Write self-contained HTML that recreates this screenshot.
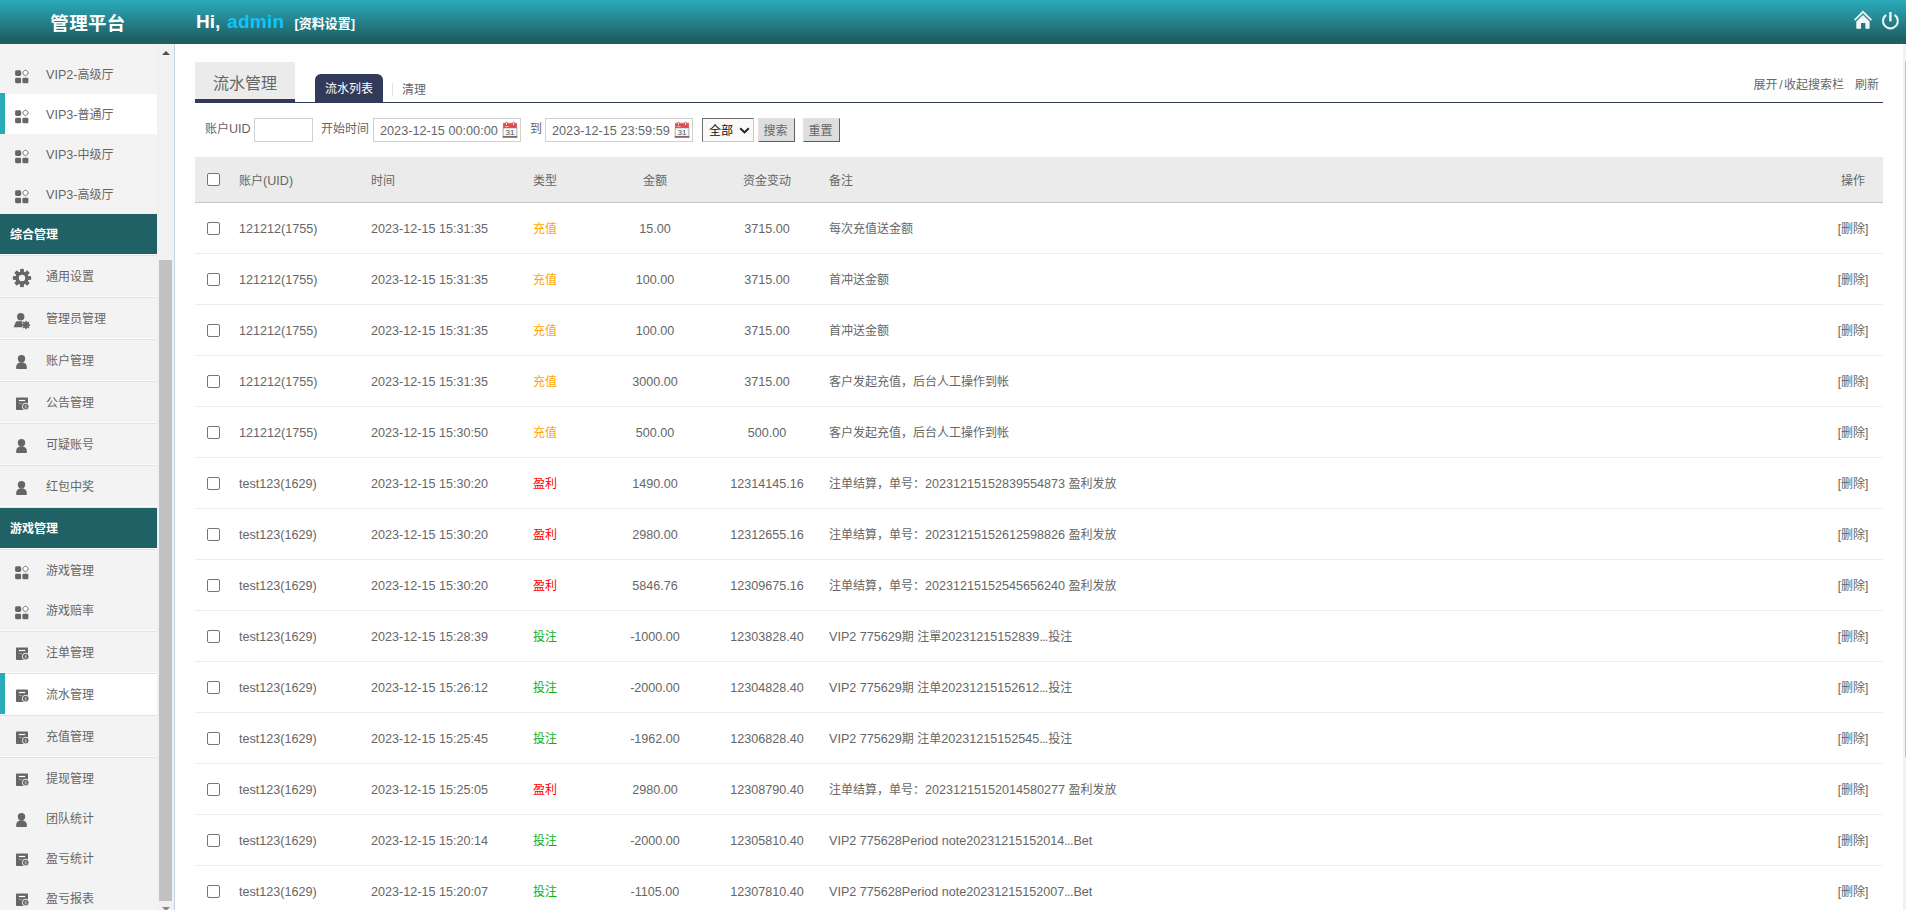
<!DOCTYPE html>
<html lang="zh-CN">
<head>
<meta charset="utf-8">
<title>管理平台</title>
<style>
*{box-sizing:border-box;}
html,body{margin:0;padding:0;}
body{width:1906px;height:910px;overflow:hidden;background:#fff;position:relative;
  font-family:"Liberation Sans","Noto Sans CJK SC",sans-serif;font-size:12px;color:#666;}
a{color:inherit;text-decoration:none;}
ul{list-style:none;margin:0;padding:0;}
.n{font-size:12.6px;}
.d{letter-spacing:-0.7px;margin-right:0.7px;}

/* ---------- header ---------- */
#hd{position:absolute;left:0;top:0;width:1906px;height:44px;
  background:linear-gradient(to bottom,#2babbb 0%,#1f5f64 90%,#1f5f64 100%);color:#fff;}
#logo{position:absolute;left:0;top:0;width:176px;height:44px;line-height:47px;text-align:center;
  font-size:18.5px;font-weight:bold;letter-spacing:0.35px;}
#hi{position:absolute;left:196px;top:0;height:44px;line-height:44px;font-size:19px;font-weight:bold;white-space:nowrap;}
#hi b{color:#12c4fb;letter-spacing:0.25px;margin-left:1.5px;}
#prof{position:absolute;left:294.5px;top:0;height:44px;line-height:47px;font-size:13px;font-weight:bold;white-space:nowrap;}
#hd svg{position:absolute;}

/* ---------- sidebar ---------- */
#side{position:absolute;left:0;top:44px;width:175px;height:866px;background:#f1f1f1;border-right:1px solid #c3d0dd;overflow:hidden;}
#menu{position:absolute;left:0;top:-30px;width:157px;background:#f3f3f3;}
#menu li{position:relative;height:40px;line-height:43px;padding-left:46px;color:#666;white-space:nowrap;}
#menu li.sp{height:2px;padding:0;background:linear-gradient(to bottom,#fcfcfc 0,#fcfcfc 1px,#e4e4e4 1px,#e4e4e4 2px);}
#menu li.on{background:#fff;}
#menu li.on::before{content:"";position:absolute;left:0;top:-1px;width:5px;height:41px;background:#2aabb9;}
#menu li.h{background:#206166;color:#fff;font-weight:bold;padding-left:10px;height:40px;line-height:42px;}
#menu li svg{position:absolute;left:12px;top:11.5px;width:20px;height:20px;}
#sb{position:absolute;left:157px;top:0;width:17px;height:866px;background:#f1f1f1;}
#sb .th{position:absolute;left:2px;top:216px;width:13px;height:641px;background:#c1c1c1;}
#sb .up{position:absolute;left:4.5px;top:7px;width:0;height:0;border:4px solid transparent;border-top:0;border-bottom:4px solid #505050;}
#sb .dn{position:absolute;left:4.5px;top:863px;width:0;height:0;border:4px solid transparent;border-bottom:0;border-top:4px solid #8a8686;}

/* ---------- main ---------- */
#main{position:absolute;left:195px;top:62px;width:1688px;}
#tabs{position:relative;height:41px;border-bottom:1px solid #323a5a;}
#ttl{position:absolute;left:0;top:0;width:100px;height:40px;background:#ebebeb;border-bottom:3px solid #323a5a;
  text-align:center;font-size:16px;line-height:44px;color:#666;}
#t1{position:absolute;left:120px;top:12px;width:68px;height:28px;background:#323a5a;color:#fff;border-radius:6px 6px 0 0;
  text-align:center;line-height:31px;font-size:12px;}
#sep{position:absolute;left:197px;top:21px;width:1px;height:13px;background:#d9e6e6;}
#t2{position:absolute;left:207px;top:12px;line-height:32px;font-size:12px;color:#666;}
#tr{position:absolute;right:4px;top:12px;line-height:22px;font-size:12px;color:#666;white-space:nowrap;}
#tr span{margin-left:11px;}

#srch{position:absolute;left:0;top:56px;height:24px;width:900px;}
#srch>*{position:absolute;top:0;height:24px;}
#srch .lb{line-height:23px;white-space:nowrap;}
#srch .in{border:1px solid #d0d0d0;background:#fff;line-height:24px;padding-left:6px;font-size:12.7px;color:#666;white-space:nowrap;}
#srch .in svg{position:absolute;right:2px;top:2px;}
#srch .sel{border:1px solid #6e6e6e;border-right-color:#c8c8c8;border-bottom-color:#c8c8c8;background:#f9f9f9;color:#111;line-height:24px;padding-left:6px;font-size:12px;}
#srch .btn{padding-right:2px;border:1px solid #e2e2e2;border-right:1px solid #606060;border-bottom:1px solid #606060;background:#dedede;color:#666;text-align:center;line-height:24px;font-size:12px;}

#tb{position:absolute;left:0;top:95px;width:1688px;border-collapse:collapse;table-layout:fixed;}
#tb th{height:45px;line-height:20px;background:#ebebeb;font-weight:normal;text-align:left;padding:4px 0 0 0;color:#666;border-bottom:1px solid #c6c6c6;}
#tb td{height:51px;line-height:20px;padding:2px 0 0 0;border-bottom:1px solid #ececec;white-space:nowrap;overflow:hidden;}
#tb tr>*:nth-child(1){width:44px;}
#tb tr>*:nth-child(2){width:132px;}
#tb tr>*:nth-child(3){width:162px;}
#tb tr>*:nth-child(4){width:67px;}
#tb tr>*:nth-child(5){width:110px;text-align:center;}
#tb tr>*:nth-child(6){width:114px;text-align:center;}
#tb tr>*:nth-child(7){padding-left:5px;}
#tb tr>*:nth-child(8){width:60px;text-align:center;}
.cb{display:block;width:13px;height:13px;border:1px solid #757575;border-radius:2px;background:#fff;margin-left:12px;}
#tb th .cb{position:relative;top:-2px;}
.c1{color:#ffa500;}
.c2{color:#ff0000;}
.c3{color:#0cb016;}

#psb{position:absolute;left:1903px;top:44px;width:3px;height:866px;background:#f1f1f1;}
#psb i{position:absolute;left:2px;top:17px;width:1px;height:696px;background:#c1c1c1;}
</style>
</head>
<body>

<div id="hd">
  <div id="logo">管理平台</div>
  <div id="hi">Hi, <b>admin</b></div>
  <div id="prof">[资料设置]</div>
  <svg style="left:1852px;top:9px" width="22" height="22" viewBox="0 0 22 22">
    <path d="M2.6 11.2 L11 2.8 L19.4 11.2" fill="none" stroke="#f2f6f6" stroke-width="1.7" stroke-linejoin="miter"/>
    <path d="M4.3 12.6 L11 5.9 L17.6 12.6 V19.8 H13.4 V14 H9 V19.8 H4.3 Z" fill="#f2f6f6"/>
  </svg>
  <svg style="left:1880px;top:10px" width="22" height="22" viewBox="0 0 22 22">
    <path d="M6.2 4.9 A7.4 7.4 0 1 0 14.6 4.9" fill="none" stroke="#f2f6f6" stroke-width="2" stroke-linecap="butt"/>
    <path d="M10.4 2 V11.4" stroke="#f2f6f6" stroke-width="2.4" fill="none"/>
  </svg>
</div>

<svg width="0" height="0" style="position:absolute">
  <defs>
    <symbol id="i-app" viewBox="0 0 20 20">
      <rect x="3.1" y="4.3" width="6" height="5.6" rx="1.4" fill="#666"/>
      <rect x="3.1" y="11.7" width="6" height="5.6" rx="1.4" fill="#666"/>
      <rect x="10.4" y="11.7" width="6" height="5.6" rx="1.4" fill="#666"/>
      <rect x="11.15" y="4.55" width="4.7" height="4.7" rx="1.5" transform="rotate(45 13.5 6.9)" fill="#fff" stroke="#666" stroke-width="0.9"/>
    </symbol>
    <symbol id="i-user" viewBox="0 0 20 20"><g>
      <circle cx="9.5" cy="6.8" r="3.7" fill="#666"/>
      <path d="M4.1 15.9 C4.1 12.4 5.9 10.2 9.5 10.2 C13.1 10.2 14.9 12.4 14.9 15.9 C14.9 16.5 14.5 16.9 13.9 16.9 H5.1 C4.5 16.9 4.1 16.5 4.1 15.9 Z" fill="#666"/>
    </g></symbol>
    <symbol id="i-doc" viewBox="0 0 20 20"><g>
      <rect x="4" y="3.5" width="12" height="12.5" rx="0.8" fill="#666"/>
      <rect x="6.8" y="5.9" width="6.4" height="1.2" fill="#fff"/>
      <rect x="6.8" y="9" width="3.2" height="1" fill="#999"/>
      <circle cx="13.7" cy="12.6" r="3.4" fill="#666" stroke="#f3f3f3" stroke-width="1"/>
      <path d="M14.2 10.8 L13 12.9 H14.3 L13.4 14.6" fill="none" stroke="#ddd" stroke-width="0.8"/>
    </g></symbol>
    <symbol id="i-gear" viewBox="0 0 20 20"><g>
      <g fill="#666">
        <circle cx="10" cy="10" r="6.6"/>
        <g id="tooth"><rect x="8.1" y="0.9" width="3.8" height="4" /></g>
        <use href="#tooth" transform="rotate(45 10 10)"/>
        <use href="#tooth" transform="rotate(90 10 10)"/>
        <use href="#tooth" transform="rotate(135 10 10)"/>
        <use href="#tooth" transform="rotate(180 10 10)"/>
        <use href="#tooth" transform="rotate(225 10 10)"/>
        <use href="#tooth" transform="rotate(270 10 10)"/>
        <use href="#tooth" transform="rotate(315 10 10)"/>
      </g>
      <circle cx="10" cy="10" r="3.2" fill="#f3f3f3"/>
    </g></symbol>
    <symbol id="i-adm" viewBox="0 0 20 20"><g transform="translate(0,1)">
      <circle cx="8.7" cy="5.8" r="3.7" fill="#666"/>
      <path d="M1.6 16.2 L3.6 11.4 C4 10.6 4.6 10.3 5.4 10.3 H10.4 V16.2 Z" fill="#666"/>
      <g fill="#666">
        <circle cx="14" cy="14" r="2.9"/>
        <g id="t2"><rect x="13.2" y="9.9" width="1.6" height="2"/></g>
        <use href="#t2" transform="rotate(45 14 14)"/>
        <use href="#t2" transform="rotate(90 14 14)"/>
        <use href="#t2" transform="rotate(135 14 14)"/>
        <use href="#t2" transform="rotate(180 14 14)"/>
        <use href="#t2" transform="rotate(225 14 14)"/>
        <use href="#t2" transform="rotate(270 14 14)"/>
        <use href="#t2" transform="rotate(315 14 14)"/>
      </g>
    </g></symbol>
    <symbol id="i-cal" viewBox="0 0 16 17">
      <rect x="1.1" y="1.9" width="13.8" height="14.8" fill="#f3f9f8"/>
      <rect x="1.1" y="6.9" width="13.8" height="8.4" fill="none" stroke="#a08585" stroke-width="0.7"/>
      <rect x="1.1" y="1.9" width="13.8" height="5" fill="#ef4444"/>
      <rect x="1.1" y="1.9" width="13.8" height="1.2" fill="#f26a6a"/>
      <rect x="2.9" y="5.2" width="3.8" height="0.7" fill="#fbd5d5"/>
      <rect x="0.6" y="15.2" width="14.8" height="1.5" fill="#7a5555"/>
      <ellipse cx="4.4" cy="2.9" rx="1" ry="1.8" fill="#f4f4f4" stroke="#7a3a4a" stroke-width="0.6"/>
      <ellipse cx="11.5" cy="2.9" rx="1" ry="1.8" fill="#f4f4f4" stroke="#7a3a4a" stroke-width="0.6"/>
      <text x="8" y="13.8" font-size="8" style="font-family:'Liberation Sans',sans-serif" text-anchor="middle" fill="#3c5759">31</text>
    </symbol>
  </defs>
</svg>

<div id="side">
  <ul id="menu">
    <li></li>
    <li><svg><use href="#i-app"/></svg><span class="n">VIP2-</span>高级厅</li>
    <li class="on"><svg><use href="#i-app"/></svg><span class="n">VIP3-</span>普通厅</li>
    <li><svg><use href="#i-app"/></svg><span class="n">VIP3-</span>中级厅</li>
    <li><svg><use href="#i-app"/></svg><span class="n">VIP3-</span>高级厅</li>
    <li class="h">综合管理</li>
    <li class="sp"></li>
    <li><svg><use href="#i-gear"/></svg>通用设置</li>
    <li class="sp"></li>
    <li><svg><use href="#i-adm"/></svg>管理员管理</li>
    <li class="sp"></li>
    <li><svg><use href="#i-user"/></svg>账户管理</li>
    <li class="sp"></li>
    <li><svg><use href="#i-doc"/></svg>公告管理</li>
    <li class="sp"></li>
    <li><svg><use href="#i-user"/></svg>可疑账号</li>
    <li class="sp"></li>
    <li><svg><use href="#i-user"/></svg>红包中奖</li>
    <li class="sp"></li>
    <li class="h">游戏管理</li>
    <li class="sp"></li>
    <li><svg><use href="#i-app"/></svg>游戏管理</li>
    <li><svg><use href="#i-app"/></svg>游戏赔率</li>
    <li class="sp"></li>
    <li><svg><use href="#i-doc"/></svg>注单管理</li>
    <li class="sp"></li>
    <li class="on"><svg><use href="#i-doc"/></svg>流水管理</li>
    <li class="sp"></li>
    <li><svg><use href="#i-doc"/></svg>充值管理</li>
    <li class="sp"></li>
    <li><svg><use href="#i-doc"/></svg>提现管理</li>
    <li><svg><use href="#i-user"/></svg>团队统计</li>
    <li><svg><use href="#i-doc"/></svg>盈亏统计</li>
    <li><svg><use href="#i-doc"/></svg>盈亏报表</li>
  </ul>
  <div id="sb"><div class="up"></div><div class="th"></div><div class="dn"></div></div>
</div>

<div id="main">
  <div id="tabs">
    <div id="ttl">流水管理</div>
    <div id="t1">流水列表</div>
    <div id="sep"></div>
    <div id="t2">清理</div>
    <div id="tr"><span>展开<span style="margin:0 1.5px">/</span>收起搜索栏</span><span>刷新</span></div>
  </div>

  <div id="srch">
    <div class="lb" style="left:10px">账户<span class="n">UID</span></div>
    <div class="in" style="left:59px;width:59px"></div>
    <div class="lb" style="left:126px">开始时间</div>
    <div class="in" style="left:178px;width:148px">2023-12-15 00:00:00<svg width="16" height="17"><use href="#i-cal"/></svg></div>
    <div class="lb" style="left:335px">到</div>
    <div class="in" style="left:350px;width:148px">2023-12-15 23:59:59<svg width="16" height="17"><use href="#i-cal"/></svg></div>
    <div class="sel" style="left:507px;width:52px">全部<svg style="position:absolute;right:3px;top:8px" width="11" height="8" viewBox="0 0 11 8"><path d="M1.2 1.2 L5.5 5.4 L9.8 1.2" fill="none" stroke="#222" stroke-width="2"/></svg></div>
    <div class="btn" style="left:563px;width:37px">搜索</div>
    <div class="btn" style="left:608px;width:37px">重置</div>
  </div>

  <table id="tb">
    <tr><th><i class="cb"></i></th><th>账户<span class="n">(UID)</span></th><th>时间</th><th>类型</th><th>金额</th><th>资金变动</th><th>备注</th><th>操作</th></tr>
    <tr><td><i class="cb"></i></td><td class="n">121212(1755)</td><td class="n">2023-12-15 15:31:35</td><td class="c1">充值</td><td class="n">15.00</td><td class="n">3715.00</td><td>每次充值送金额</td><td>[删除]</td></tr>
    <tr><td><i class="cb"></i></td><td class="n">121212(1755)</td><td class="n">2023-12-15 15:31:35</td><td class="c1">充值</td><td class="n">100.00</td><td class="n">3715.00</td><td>首冲送金额</td><td>[删除]</td></tr>
    <tr><td><i class="cb"></i></td><td class="n">121212(1755)</td><td class="n">2023-12-15 15:31:35</td><td class="c1">充值</td><td class="n">100.00</td><td class="n">3715.00</td><td>首冲送金额</td><td>[删除]</td></tr>
    <tr><td><i class="cb"></i></td><td class="n">121212(1755)</td><td class="n">2023-12-15 15:31:35</td><td class="c1">充值</td><td class="n">3000.00</td><td class="n">3715.00</td><td>客户发起充值，后台人工操作到帐</td><td>[删除]</td></tr>
    <tr><td><i class="cb"></i></td><td class="n">121212(1755)</td><td class="n">2023-12-15 15:30:50</td><td class="c1">充值</td><td class="n">500.00</td><td class="n">500.00</td><td>客户发起充值，后台人工操作到帐</td><td>[删除]</td></tr>
    <tr><td><i class="cb"></i></td><td class="n">test123(1629)</td><td class="n">2023-12-15 15:30:20</td><td class="c2">盈利</td><td class="n">1490.00</td><td class="n">12314145.16</td><td>注单结算，单号：<span class="n">20231215152839554873</span> 盈利发放</td><td>[删除]</td></tr>
    <tr><td><i class="cb"></i></td><td class="n">test123(1629)</td><td class="n">2023-12-15 15:30:20</td><td class="c2">盈利</td><td class="n">2980.00</td><td class="n">12312655.16</td><td>注单结算，单号：<span class="n">20231215152612598826</span> 盈利发放</td><td>[删除]</td></tr>
    <tr><td><i class="cb"></i></td><td class="n">test123(1629)</td><td class="n">2023-12-15 15:30:20</td><td class="c2">盈利</td><td class="n">5846.76</td><td class="n">12309675.16</td><td>注单结算，单号：<span class="n">20231215152545656240</span> 盈利发放</td><td>[删除]</td></tr>
    <tr><td><i class="cb"></i></td><td class="n">test123(1629)</td><td class="n">2023-12-15 15:28:39</td><td class="c3">投注</td><td class="n">-1000.00</td><td class="n">12303828.40</td><td><span class="n">VIP2 775629</span>期 注單<span class="n">20231215152839<span class="d">...</span></span>投注</td><td>[删除]</td></tr>
    <tr><td><i class="cb"></i></td><td class="n">test123(1629)</td><td class="n">2023-12-15 15:26:12</td><td class="c3">投注</td><td class="n">-2000.00</td><td class="n">12304828.40</td><td><span class="n">VIP2 775629</span>期 注单<span class="n">20231215152612<span class="d">...</span></span>投注</td><td>[删除]</td></tr>
    <tr><td><i class="cb"></i></td><td class="n">test123(1629)</td><td class="n">2023-12-15 15:25:45</td><td class="c3">投注</td><td class="n">-1962.00</td><td class="n">12306828.40</td><td><span class="n">VIP2 775629</span>期 注单<span class="n">20231215152545<span class="d">...</span></span>投注</td><td>[删除]</td></tr>
    <tr><td><i class="cb"></i></td><td class="n">test123(1629)</td><td class="n">2023-12-15 15:25:05</td><td class="c2">盈利</td><td class="n">2980.00</td><td class="n">12308790.40</td><td>注单结算，单号：<span class="n">20231215152014580277</span> 盈利发放</td><td>[删除]</td></tr>
    <tr><td><i class="cb"></i></td><td class="n">test123(1629)</td><td class="n">2023-12-15 15:20:14</td><td class="c3">投注</td><td class="n">-2000.00</td><td class="n">12305810.40</td><td class="n">VIP2 775628Period note20231215152014<span class="d">...</span>Bet</td><td>[删除]</td></tr>
    <tr><td><i class="cb"></i></td><td class="n">test123(1629)</td><td class="n">2023-12-15 15:20:07</td><td class="c3">投注</td><td class="n">-1105.00</td><td class="n">12307810.40</td><td class="n">VIP2 775628Period note20231215152007<span class="d">...</span>Bet</td><td>[删除]</td></tr>
  </table>
</div>

<div id="psb"><i></i></div>

</body>
</html>
